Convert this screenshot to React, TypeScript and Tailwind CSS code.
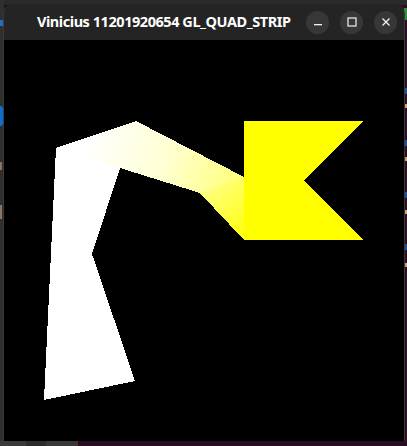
import React from "react";

function Btn({ children }: { children: React.ReactNode }) {
  return (
    <div className="w-[23px] h-[23px] rounded-full bg-[#373737] flex items-center justify-center">
      {children}
    </div>
  );
}

export default function App() {
  return (
    <div className="relative w-[407px] h-[446px] overflow-hidden bg-[#2b0d22]">
      {/* desktop background bits */}
      <div className="absolute left-0 top-0 w-[407px] h-[5px] bg-[#2a2a2a]" />
      <div className="absolute left-0 top-0 w-[4px] h-[446px] bg-[#2f2f2f]" />
      <div className="absolute left-0 top-[20px] w-[3px] h-[6px] bg-[#1e6fbf]" />
      <div className="absolute left-0 top-[106px] w-[3px] h-[20px] bg-[#0a6fd0] rounded-r" />
      <div className="absolute left-0 top-[162px] w-[2px] h-[8px] bg-[#8a7460]" />
      <div className="absolute left-0 top-[205px] w-[2px] h-[14px] bg-[#8a7460]" />
      <div className="absolute right-0 top-[8px] w-[3px] h-[12px] bg-[#2f8f3f]" />
      <div className="absolute right-0 top-[88px] flex flex-col gap-[46px]">
        <div className="w-[2px] h-[6px] bg-[#1d4f9a]" />
        <div className="w-[2px] h-[6px] bg-[#1d4f9a]" />
        <div className="w-[2px] h-[6px] bg-[#1d4f9a]" />
        <div className="w-[2px] h-[6px] bg-[#1d4f9a]" />
      </div>
      <div className="absolute right-0 top-[104px] flex flex-col gap-[49px]">
        <div className="w-[2px] h-[4px] bg-[#c9a27a]" />
        <div className="w-[2px] h-[4px] bg-[#c9a27a]" />
        <div className="w-[2px] h-[4px] bg-[#c9a27a]" />
        <div className="w-[2px] h-[4px] bg-[#c9a27a]" />
      </div>
      <div className="absolute left-0 top-[441px] flex h-[5px]">
        <div className="w-[26px] bg-[#3a3a3a]" />
        <div className="w-[20px] bg-[#2c2c2c]" />
        <div className="w-[32px] bg-[#383838]" />
      </div>

      {/* window */}
      <div className="absolute left-[3px] top-[4px] w-[402px] h-[437px] flex flex-col rounded-t-[10px] overflow-hidden bg-[#242424] border-x border-[#3a3a3a]">
        <div className="h-[36px] flex items-center bg-[#242424] pl-[33px] pr-[7px]">
          <div
            className="text-white font-bold text-[14.5px] tracking-[-0.45px] whitespace-nowrap"
            style={{ fontFamily: '"Noto Sans", "Open Sans", sans-serif' }}
          >
            Vinicius 11201920654 GL_QUAD_STRIP
          </div>
          <div className="ml-auto flex gap-[11px]">
            <Btn>
              <svg width="10" height="10" viewBox="0 0 10 10">
                <rect x="1" y="7" width="8" height="1.3" fill="#f2f2f2" />
              </svg>
            </Btn>
            <Btn>
              <svg width="10" height="10" viewBox="0 0 10 10">
                <rect x="1" y="1" width="8" height="8" fill="none" stroke="#f2f2f2" strokeWidth="1.2" />
              </svg>
            </Btn>
            <Btn>
              <svg width="10" height="10" viewBox="0 0 10 10">
                <path d="M1.5 1.5 L8.5 8.5 M8.5 1.5 L1.5 8.5" stroke="#f2f2f2" strokeWidth="1.3" />
              </svg>
            </Btn>
          </div>
        </div>
        <div className="flex-1 bg-black">
          <svg width="400" height="401" viewBox="4 40 400 401" shapeRendering="crispEdges">
            <defs>
              <linearGradient id="band" gradientUnits="userSpaceOnUse" x1="90" y1="140" x2="244" y2="190">
                <stop offset="0" stopColor="#ffffff" />
                <stop offset="0.5" stopColor="#ffffd0" />
                <stop offset="1" stopColor="#ffff70" />
              </linearGradient>
              <linearGradient id="tri" gradientUnits="userSpaceOnUse" x1="205" y1="190" x2="244" y2="235">
                <stop offset="0" stopColor="#ffff80" />
                <stop offset="1" stopColor="#ffff10" />
              </linearGradient>
            </defs>
            <polygon points="56,148 120,168 92,254 135,381 44,400" fill="#ffffff" />
            <polygon points="56,148 136,121 244,177 200,193 120,168" fill="url(#band)" />
            <polygon points="200,193 244,177 244,240" fill="url(#tri)" />
            <polygon points="244,121 363,121 304,181 363,240 244,240" fill="#ffff00" />
          </svg>
        </div>
      </div>
    </div>
  );
}
